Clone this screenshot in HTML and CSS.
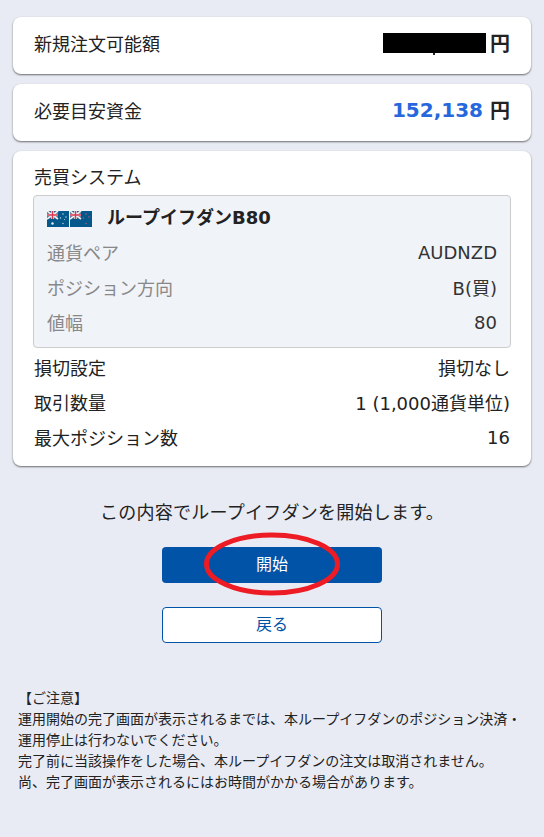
FILE: index.html
```html
<!DOCTYPE html>
<html lang="ja">
<head>
<meta charset="utf-8">
<title>ループイフダン</title>
<link rel="stylesheet" href="styles.css">
</head>
<body>
<main class="page">
  <section class="card row-card">
    <span>新規注文可能額</span>
    <span class="amount"><span class="redact"><span class="comma"></span></span><span class="yen">円</span></span>
  </section>
  <section class="card row-card">
    <span>必要目安資金</span>
    <span class="amount"><span class="num">152,138</span><span class="yen">円</span></span>
  </section>
  <section class="card system">
    <h2 class="system-title">売買システム</h2>
    <div class="inner">
      <div class="inner-head">
        <span class="flags">
          <svg class="flag" viewBox="0 0 22 16" width="22" height="16">
            <rect width="22" height="16" fill="#03588c"/>
            <rect width="11" height="8" fill="#3a5a86"/>
            <path d="M0 0L11 8M11 0L0 8" stroke="#eee" stroke-width="1.6"/>
            <path d="M5.5 0V8M0 4H11" stroke="#eee" stroke-width="2.6"/>
            <path d="M5.5 0V8M0 4H11" stroke="#d8394f" stroke-width="1.3"/>
            <circle cx="5.5" cy="12.5" r="1.2" fill="#eee"/>
            <circle cx="16" cy="3" r=".7" fill="#cde"/><circle cx="16" cy="12.5" r=".7" fill="#cde"/><circle cx="13.5" cy="7" r=".7" fill="#cde"/><circle cx="19" cy="6" r=".7" fill="#cde"/><circle cx="17.5" cy="8.5" r=".5" fill="#cde"/>
          </svg>
          <svg class="flag" viewBox="0 0 22 16" width="22" height="16">
            <rect width="22" height="16" fill="#03588c"/>
            <rect width="11" height="8" fill="#3a5a86"/>
            <path d="M0 0L11 8M11 0L0 8" stroke="#eee" stroke-width="1.6"/>
            <path d="M5.5 0V8M0 4H11" stroke="#eee" stroke-width="2.6"/>
            <path d="M5.5 0V8M0 4H11" stroke="#d8394f" stroke-width="1.3"/>
            <circle cx="16" cy="3" r=".8" fill="#c9526a"/><circle cx="16" cy="12.5" r=".8" fill="#c9526a"/><circle cx="13.5" cy="7" r=".8" fill="#c9526a"/><circle cx="19" cy="6" r=".8" fill="#c9526a"/>
          </svg>
        </span>
        <span class="name">ループイフダンB80</span>
      </div>
      <div class="kv muted"><span>通貨ペア</span><span class="val">AUDNZD</span></div>
      <div class="kv muted"><span>ポジション方向</span><span class="val">B(買)</span></div>
      <div class="kv muted"><span>値幅</span><span class="val">80</span></div>
    </div>
    <div class="kv plain"><span>損切設定</span><span>損切なし</span></div>
    <div class="kv plain"><span>取引数量</span><span>1 (1,000通貨単位)</span></div>
    <div class="kv plain"><span>最大ポジション数</span><span>16</span></div>
  </section>
  <p class="lead">この内容でループイフダンを開始します。</p>
  <div class="actions">
    <div class="start-wrap">
      <button class="btn primary">開始</button>
      <svg class="circle" viewBox="0 0 136 64" width="136" height="64"><ellipse cx="68" cy="32" rx="65.5" ry="29" fill="none" stroke="#ed1c24" stroke-width="5"/></svg>
    </div>
    <button class="btn secondary">戻る</button>
  </div>
  <div class="notice">
    <p class="notice-head">【ご注意】</p>
    <p>運用開始の完了画面が表示されるまでは、本ループイフダンのポジション決済・<br>運用停止は行わないでください。<br>完了前に当該操作をした場合、本ループイフダンの注文は取消されません。<br>尚、完了画面が表示されるにはお時間がかかる場合があります。</p>
  </div>
</main>
</body>
</html>
```
FILE: styles.css
```css
* { box-sizing: border-box; }
html, body { margin: 0; padding: 0; }
body {
  background: #e8ebf4;
  color: #222;
  font-family: "DejaVu Sans", "Noto Sans CJK JP", sans-serif;
  font-size: 18px;
  height: 837px;
  overflow: hidden;
}
.page { padding: 17px 13px 0; display: flex; flex-direction: column; }
.card {
  background: #fff;
  border-radius: 8px;
  box-shadow: 0 1px 2px rgba(0, 0, 0, .55);
  margin-bottom: 10px;
}
.row-card {
  height: 57px;
  padding: 0 21px 6px;
  display: flex;
  align-items: center;
  justify-content: space-between;
}
.amount { display: flex; align-items: center; font-weight: 700; font-size: 20px; }
.redact { position: relative; display: block; width: 103px; height: 20px; background: #000; margin-right: 4px; }
.comma { position: absolute; left: 50px; top: 20px; width: 2px; height: 2px; background: #222; }
.num { color: #2767de; margin-right: 7px; }
.yen { font-weight: 700; font-size: 20px; }
.system { height: 315px; padding: 14px 21px 0; margin-bottom: 0; }
.system-title { margin: 0 0 5px; font-size: 18px; font-weight: 400; line-height: 25px; }
.inner {
  background: #f0f3f8;
  border: 1px solid #ccc;
  border-radius: 4px;
  padding: 0 13px;
  height: 153px;
  margin: 0 -1px 0;
}
.inner-head { display: flex; align-items: center; height: 40px; }
.flags { display: flex; gap: 1px; margin: 6px 15px 0 0; }
.flag { display: block; }
.name { font-weight: 700; font-size: 18px; }
.kv { display: flex; justify-content: space-between; align-items: center; height: 35px; padding-bottom: 3px; }
.muted { color: #888; }
.muted .val { color: #333; }
.plain { height: 35px; }
.inner + .plain { margin-top: 3px; }
.lead { margin: 34px 0 0; text-align: center; font-size: 18px; line-height: 26px; padding-bottom: 2px; letter-spacing: .25px; }
.actions { display: flex; flex-direction: column; align-items: center; margin-top: 19px; gap: 24px; }
.start-wrap { position: relative; width: 220px; height: 36px; }
.btn {
  display: block;
  width: 220px;
  height: 36px;
  border-radius: 4px;
  font: inherit;
  font-size: 16px;
  padding: 0 0 4px;
}
.primary { background: #0053a6; color: #fff; border: 0; }
.secondary { background: #fff; color: #0053a6; border: 1px solid #0053a6; }
.circle { position: absolute; left: 42px; top: -15px; }
.notice { margin: 44px 0 0 5px; font-size: 14px; line-height: 21px; color: #222; }
.notice p { margin: 0; white-space: nowrap; }
.notice-head { line-height: 22px; }
```
